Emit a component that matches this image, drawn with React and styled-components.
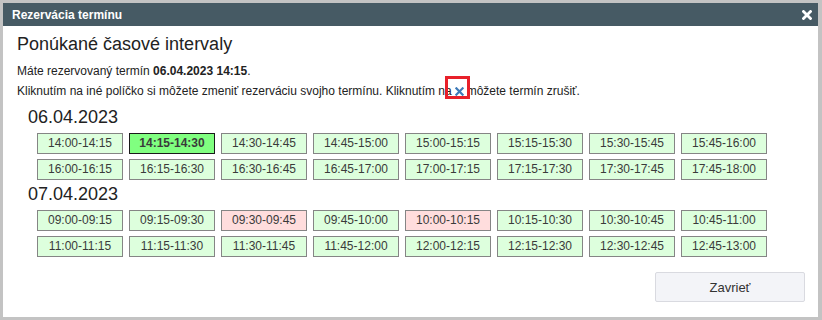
import React from "react"
import styled, { createGlobalStyle } from "styled-components"

const GlobalStyle = createGlobalStyle`
    html, body {
        margin: 0;
        padding: 0;
        background: #c3c3c3;
    }
    body {
        font-family: "Liberation Sans", Arial, sans-serif;
        color: #222;
    }
`

const Frame = styled.div`
    width: 822px;
    height: 320px;
    box-sizing: border-box;
    padding: 3px 4px 3px 3px;
`

const Window = styled.div`
    height: 100%;
    background: #fff;
    display: flex;
    flex-direction: column;
`

const TitleBar = styled.div`
    height: 23px;
    background: #465a64;
    display: flex;
    align-items: center;
    justify-content: space-between;
    padding: 0 6px 0 9px;
    color: #fff;
    font-size: 12px;
    font-weight: bold;
`

const CloseIcon = styled.svg`
    width: 10px;
    height: 10px;
    display: block;
`

const Content = styled.div`
    flex: 1;
    padding: 7px 13px 0 14px;
    display: flex;
    flex-direction: column;
`

const Heading = styled.h1`
    margin: 0;
    font-size: 18px;
    line-height: 22px;
    font-weight: normal;
    color: #222;
`

const Line = styled.p`
    margin: 0;
    font-size: 12px;
    line-height: 20px;
    color: #222;
    &:first-of-type {
        margin-top: 6px;
    }
`

const Marked = styled.span`
    position: relative;
    display: inline-block;
    width: 9px;
    margin: 0 3px;
    vertical-align: -1px;

    &::after {
        content: "";
        position: absolute;
        left: -10px;
        top: -11px;
        width: 19px;
        height: 17px;
        border: 3px solid #e8202a;
    }
`

const DateTitle = styled.h2`
    margin: ${props => props.$first ? "5px" : "3px"} 0 0 11px;
    font-size: 18px;
    line-height: 22px;
    font-weight: normal;
    color: #222;
`

const Slots = styled.div`
    margin: 5px 0 0 20px;
    display: grid;
    grid-template-columns: repeat(8, 86px);
    column-gap: 6px;
    row-gap: 5px;
`

const colors = {
    free: { bg: "#ddffdd", border: "#858585" },
    taken: { bg: "#ffdddd", border: "#858585" },
    mine: { bg: "#80ff80", border: "#1a1a1a" },
}

const Slot = styled.div`
    height: 21px;
    box-sizing: border-box;
    border: 1px solid ${props => colors[props.$state].border};
    background: ${props => colors[props.$state].bg};
    font-size: 12px;
    line-height: 19px;
    text-align: center;
    color: #3a3a3a;
    font-weight: ${props => props.$state === "mine" ? "bold" : "normal"};
    cursor: pointer;
`

const Footer = styled.div`
    margin-top: auto;
    display: flex;
    justify-content: flex-end;
    padding-bottom: 15px;
`

const CloseButton = styled.button`
    width: 150px;
    height: 30px;
    background: #f3f4f8;
    border: 1px solid #d9dae0;
    border-radius: 2px;
    font-family: "Liberation Sans", Arial, sans-serif;
    font-size: 13px;
    color: #333;
`

const XIcon = ({ color, size, stroke }) => (
    <CloseIcon viewBox="0 0 10 10" style={{ width: size, height: size }}>
        <path d="M1.5 1.5 L8.5 8.5 M8.5 1.5 L1.5 8.5" stroke={color} strokeWidth={stroke} strokeLinecap="square" fill="none" />
    </CloseIcon>
)

const days = [
    {
        date: "06.04.2023",
        slots: [
            ["14:00-14:15"], ["14:15-14:30", "mine"], ["14:30-14:45"], ["14:45-15:00"],
            ["15:00-15:15"], ["15:15-15:30"], ["15:30-15:45"], ["15:45-16:00"],
            ["16:00-16:15"], ["16:15-16:30"], ["16:30-16:45"], ["16:45-17:00"],
            ["17:00-17:15"], ["17:15-17:30"], ["17:30-17:45"], ["17:45-18:00"],
        ],
    },
    {
        date: "07.04.2023",
        slots: [
            ["09:00-09:15"], ["09:15-09:30"], ["09:30-09:45", "taken"], ["09:45-10:00"],
            ["10:00-10:15", "taken"], ["10:15-10:30"], ["10:30-10:45"], ["10:45-11:00"],
            ["11:00-11:15"], ["11:15-11:30"], ["11:30-11:45"], ["11:45-12:00"],
            ["12:00-12:15"], ["12:15-12:30"], ["12:30-12:45"], ["12:45-13:00"],
        ],
    },
]

const App = () => {
    return (
        <Frame>
            <GlobalStyle />
            <Window>
                <TitleBar>
                    <span>Rezervácia termínu</span>
                    <XIcon color="#fff" size="10px" stroke={2.8} />
                </TitleBar>
                <Content>
                    <Heading>Ponúkané časové intervaly</Heading>
                    <Line>Máte rezervovaný termín <b>06.04.2023 14:15</b>.</Line>
                    <Line>
                        Kliknutím na iné políčko si môžete zmeniť rezerváciu svojho termínu. Kliknutím na
                        <Marked><XIcon color="#3d7ab8" size="9px" stroke={2.4} /></Marked>
                        môžete termín zrušiť.
                    </Line>
                    {days.map((day, i) => (
                        <React.Fragment key={day.date}>
                            <DateTitle $first={i === 0}>{day.date}</DateTitle>
                            <Slots>
                                {day.slots.map(([time, state]) => (
                                    <Slot key={time} $state={state || "free"}>{time}</Slot>
                                ))}
                            </Slots>
                        </React.Fragment>
                    ))}
                    <Footer>
                        <CloseButton>Zavrieť</CloseButton>
                    </Footer>
                </Content>
            </Window>
        </Frame>
    )
}

export default App
